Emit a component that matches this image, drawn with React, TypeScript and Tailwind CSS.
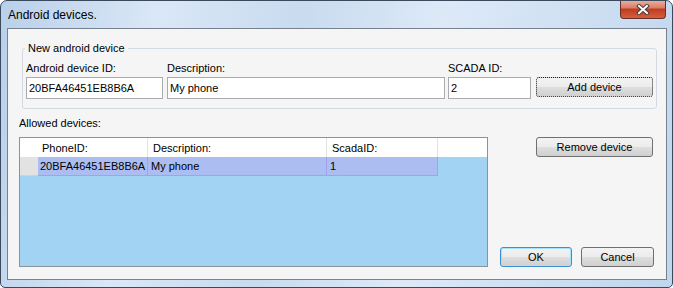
import React from 'react';

const btn =
  "flex items-center justify-center rounded-[3px] border text-[11px] leading-none text-black bg-[linear-gradient(#f3f3f3_0%,#ececec_48%,#dedede_52%,#d0d0d0_100%)]";

const TextBox: React.FC<{ value: string; width: string }> = ({ value, width }) => (
  <div className={`${width} h-[22px] mt-[2px] flex items-center pl-[2px] border border-[#a9abb0] bg-white text-[11px]`}>
    {value}
  </div>
);

const Field: React.FC<{ label: string; value: string; width: string; className?: string }> = ({ label, value, width, className }) => (
  <div className={`flex flex-col ${className ?? ''}`}>
    <span className="leading-[14px] text-[11px]">{label}</span>
    <TextBox value={value} width={width} />
  </div>
);

const CloseIcon = () => (
  <svg width="14" height="11" viewBox="0 0 14 11">
    <path d="M3 2 L11 9 M11 2 L3 9" stroke="#4a3a38" strokeWidth="4" strokeLinecap="square" />
    <path d="M3 2 L11 9 M11 2 L3 9" stroke="#ffffff" strokeWidth="2" strokeLinecap="square" />
  </svg>
);

export default function App() {
  return (
    <div className="w-[673px] h-[288px] flex flex-col overflow-hidden rounded-t-[7px] rounded-b-[5px] border border-[#3a4a5c] bg-[linear-gradient(100deg,#b9d0ea_0%,#dae7f6_22%,#c8dbef_42%,#dde9f7_62%,#c0d6ed_100%)] font-['Liberation_Sans',Arial,sans-serif] text-black">
      {/* title bar */}
      <div className="h-[27px] flex items-start justify-between">
        <span className="pl-[7px] pt-[6px] text-[12px] leading-[16px]">Android devices.</span>
        <div className="w-[46px] h-[19px] -mt-[1px] mr-[6px] flex items-center justify-center rounded-b-[4px] border border-t-0 border-[#6b2e26] bg-[linear-gradient(#eab3a6_0%,#d98068_42%,#c23c20_52%,#d4603f_100%)]">
          <CloseIcon />
        </div>
      </div>

      {/* client area */}
      <div className="ml-[6px] mr-[5px] h-[252px] border border-[#76838f] bg-[#f5f5f5] flex flex-col">
        <fieldset className="ml-[14px] mt-[12px] w-[635px] rounded-[3px] border border-[#d2dbe2] pb-[9px]">
          <legend className="ml-[2px] px-[3px] text-[11px] leading-[14px]">New android device</legend>
          <div className="flex items-end pt-[6px] pl-[3px]">
            <Field label="Android device ID:" value="20BFA46451EB8B6A" width="w-[137px]" />
            <Field label="Description:" value="My phone" width="w-[278px]" className="ml-[4px]" />
            <Field label="SCADA ID:" value="2" width="w-[83px]" className="ml-[3px]" />
            <button className={`${btn} ml-[5px] mb-[2px] w-[117px] h-[20px] border-dotted border-[#222]`}>Add device</button>
          </div>
        </fieldset>

        <div className="flex ml-[11px] mt-[7px]">
          <div className="w-[469px] flex flex-col">
            <span className="text-[11px] leading-[14px]">Allowed devices:</span>
            <div className="mt-[7px] h-[130px] border border-[#8e9197] bg-[#a2d3f3] flex flex-col text-[11px]">
              {/* header */}
              <div className="h-[19px] flex bg-white">
                <div className="w-[18px]" />
                <div className="w-[110px] pl-[4px] pt-[2px] flex items-center border-r border-[#e2e2e2]">PhoneID:</div>
                <div className="w-[179px] pl-[5px] pt-[2px] flex items-center border-r border-[#e2e2e2]">Description:</div>
                <div className="w-[111px] pl-[5px] pt-[2px] flex items-center border-r border-[#e2e2e2]">ScadaID:</div>
                <div className="flex-1" />
              </div>
              {/* selected row */}
              <div className="h-[19px] flex">
                <div className="w-[18px] bg-[#e2e2e2] border-b border-[#d2d2d2]" />
                <div className="w-[110px] pl-[2px] flex items-center bg-[#abbdf1] border-r border-b border-[#a0a3ea]">20BFA46451EB8B6A</div>
                <div className="w-[179px] pl-[3px] flex items-center bg-[#abbdf1] border-r border-b border-[#a0a3ea]">My phone</div>
                <div className="w-[111px] pl-[3px] flex items-center bg-[#abbdf1] border-r border-b border-[#a0a3ea]">1</div>
              </div>
            </div>
          </div>

          <div className="ml-[12px] w-[154px] flex flex-col">
            <button className={`${btn} mt-[21px] mr-[1px] self-end w-[117px] h-[20px] border-[#707070]`}>Remove device</button>
            <div className="mt-auto flex">
              <button className={`${btn} w-[72px] h-[20px] border-[#3c8fd0] shadow-[inset_0_0_0_1px_#a6e2fa]`}>OK</button>
              <button className={`${btn} ml-[9px] w-[73px] h-[20px] border-[#707070]`}>Cancel</button>
            </div>
          </div>
        </div>
      </div>
    </div>
  );
}
